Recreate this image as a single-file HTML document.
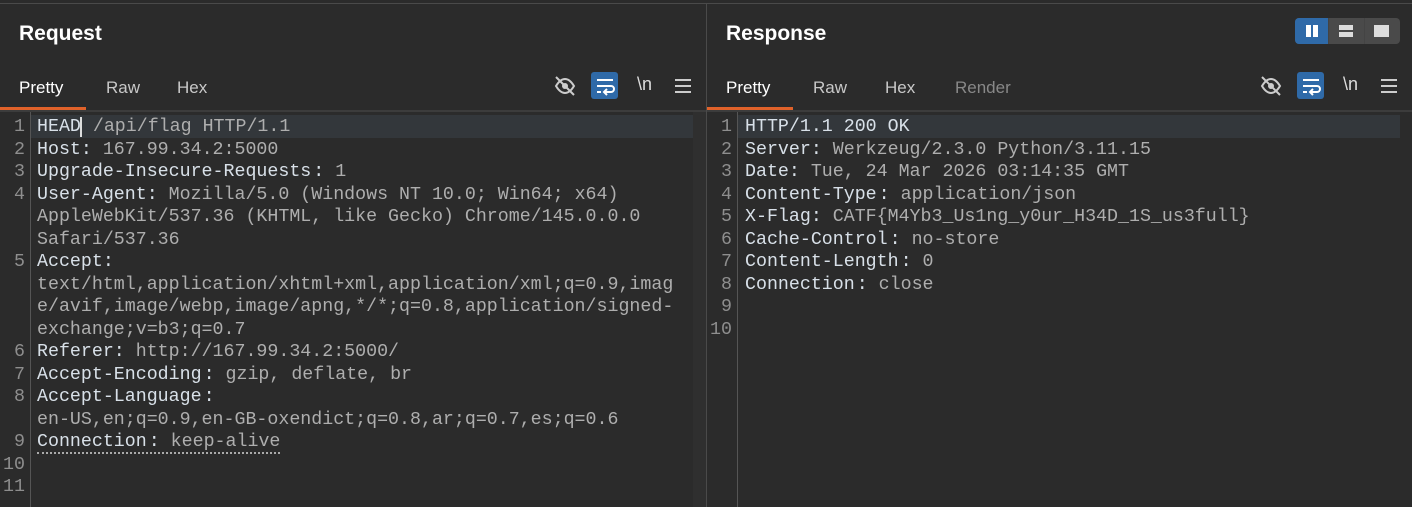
<!DOCTYPE html>
<html><head><style>
*{margin:0;padding:0;box-sizing:border-box}
body{width:1412px;height:507px;background:#2b2b2b;overflow:hidden;position:relative;font-family:"Liberation Sans",sans-serif}
.abs{position:absolute}
.title{font-weight:bold;font-size:21px;color:#fff;top:22px}
.tab{font-size:17px;color:#c8c8c8;top:78px}
.tab.act{color:#fff}
.code{font-family:"Liberation Mono",monospace;font-size:18.3px;line-height:22.5px;color:#aeaeae;white-space:pre}
.k{color:#d8e0e8}
.c{margin-left:2px}
.num{font-family:"Liberation Mono",monospace;font-size:18.3px;line-height:22.5px;color:#8e8e8e;text-align:right;white-space:pre}
.ic{width:28px;height:28px;top:72px}
</style></head><body>
<div class="abs" style="left:0;top:3px;width:1412px;height:1px;background:#4a4a4a"></div>
<div class="abs" style="left:706px;top:3px;width:1px;height:504px;background:#4a4a4a"></div>
<!-- Left -->
<div class="abs title" style="left:19px">Request</div>
<div class="abs tab act" style="left:19px">Pretty</div>
<div class="abs tab" style="left:106px">Raw</div>
<div class="abs tab" style="left:177px">Hex</div>
<div class="abs" style="left:0;top:107px;width:86px;height:3px;background:#e0622a"></div>
<div class="abs" style="left:0;top:110px;width:706px;height:2px;background:#3c3c3c"></div>
<svg class="abs ic" style="left:551px" viewBox="0 0 28 28"><path d="M5 14c3-5 6-7 9-7s6 2 9 7c-3 5-6 7-9 7s-6-2-9-7z" fill="none" stroke="#ccc" stroke-width="2"/><circle cx="14" cy="14" r="3" fill="#ccc"/><path d="M5 5l18 18" stroke="#ccc" stroke-width="2"/></svg>
<div class="abs" style="left:591px;top:72px;width:27px;height:27px;background:#2f6aa8;border-radius:3px"></div>
<svg class="abs ic" style="left:591px" viewBox="0 0 28 28"><path d="M6 8h16M6 14h14a3 3 0 0 1 0 6h-6M6 20h4" fill="none" stroke="#fff" stroke-width="2"/><path d="M16 17l-3 3 3 3" fill="none" stroke="#fff" stroke-width="2"/></svg>
<div class="abs" style="left:637px;top:74px;color:#ddd;font-size:18px">\n</div>
<svg class="abs ic" style="left:669px" viewBox="0 0 28 28"><path d="M6 8h16M6 14h16M6 20h16" stroke="#ccc" stroke-width="2"/></svg>
<div class="abs" style="left:30px;top:112px;width:1px;height:395px;background:#555"></div>
<div class="abs" style="left:31px;top:115px;width:662px;height:23px;background:#33373b"></div>
<div class="abs" style="left:693px;top:112px;width:13px;height:395px;background:#2f2f2f"></div>
<div class="abs num" style="left:0;top:116px;width:25px">1
2
3
4


5



6
7
8

9
10
11</div>
<div class="abs code" style="left:37px;top:116px"><span class="k">HEAD</span><span style="border-left:2px solid #ddd;margin-left:-1px"></span> /api/flag HTTP/1.1
<span class="k">Host:</span> 167.99.34.2:5000
<span class="k">Upgrade-Insecure-Requests<span class="c">:</span></span> 1
<span class="k">User-Agent:</span> Mozilla/5.0 (Windows NT 10.0; Win64; x64)
AppleWebKit/537.36 (KHTML, like Gecko) Chrome/145.0.0.0
Safari/537.36
<span class="k">Accept:</span>
text/html,application/xhtml+xml,application/xml;q=0.9,imag
e/avif,image/webp,image/apng,*/*;q=0.8,application/signed-
exchange;v=b3;q=0.7
<span class="k">Referer:</span> http://167.99.34.2:5000/
<span class="k">Accept-Encoding<span class="c">:</span></span> gzip, deflate, br
<span class="k">Accept-Language<span class="c">:</span></span>
en-US,en;q=0.9,en-GB-oxendict;q=0.8,ar;q=0.7,es;q=0.6
<span style="border-bottom:2px dotted #aaa"><span class="k">Connection<span class="c">:</span></span> keep-alive</span></div>
<!-- Right -->
<div class="abs title" style="left:726px">Response</div>
<div class="abs" style="left:1295px;top:18px;width:105px;height:26px;background:#4a4a4a;border-radius:4px;overflow:hidden">
<div class="abs" style="left:0;top:0;width:33px;height:26px;background:#2f6aa8"></div>
<div class="abs" style="left:11px;top:7px;width:5px;height:12px;background:#fff"></div>
<div class="abs" style="left:18px;top:7px;width:5px;height:12px;background:#fff"></div>
<div class="abs" style="left:33px;top:0;width:1px;height:26px;background:#444"></div>
<div class="abs" style="left:44px;top:7px;width:14px;height:5px;background:#ddd"></div>
<div class="abs" style="left:44px;top:14px;width:14px;height:5px;background:#ddd"></div>
<div class="abs" style="left:69px;top:0;width:1px;height:26px;background:#444"></div>
<div class="abs" style="left:79px;top:7px;width:15px;height:12px;background:#ddd"></div>
</div>
<div class="abs tab act" style="left:726px">Pretty</div>
<div class="abs tab" style="left:813px">Raw</div>
<div class="abs tab" style="left:885px">Hex</div>
<div class="abs tab" style="left:955px;color:#888">Render</div>
<div class="abs" style="left:707px;top:107px;width:86px;height:3px;background:#e0622a"></div>
<div class="abs" style="left:707px;top:110px;width:705px;height:2px;background:#3c3c3c"></div>
<svg class="abs ic" style="left:1257px" viewBox="0 0 28 28"><path d="M5 14c3-5 6-7 9-7s6 2 9 7c-3 5-6 7-9 7s-6-2-9-7z" fill="none" stroke="#ccc" stroke-width="2"/><circle cx="14" cy="14" r="3" fill="#ccc"/><path d="M5 5l18 18" stroke="#ccc" stroke-width="2"/></svg>
<div class="abs" style="left:1297px;top:72px;width:27px;height:27px;background:#2f6aa8;border-radius:3px"></div>
<svg class="abs ic" style="left:1297px" viewBox="0 0 28 28"><path d="M6 8h16M6 14h14a3 3 0 0 1 0 6h-6M6 20h4" fill="none" stroke="#fff" stroke-width="2"/><path d="M16 17l-3 3 3 3" fill="none" stroke="#fff" stroke-width="2"/></svg>
<div class="abs" style="left:1343px;top:74px;color:#ddd;font-size:18px">\n</div>
<svg class="abs ic" style="left:1375px" viewBox="0 0 28 28"><path d="M6 8h16M6 14h16M6 20h16" stroke="#ccc" stroke-width="2"/></svg>
<div class="abs" style="left:737px;top:112px;width:1px;height:395px;background:#555"></div>
<div class="abs" style="left:738px;top:115px;width:662px;height:23px;background:#33373b"></div>
<div class="abs num" style="left:707px;top:116px;width:25px">1
2
3
4
5
6
7
8
9
10</div>
<div class="abs code" style="left:745px;top:116px"><span class="k">HTTP/1.1 200 OK</span>
<span class="k">Server:</span> Werkzeug/2.3.0 Python/3.11.15
<span class="k">Date:</span> Tue, 24 Mar 2026 03:14:35 GMT
<span class="k">Content-Type<span class="c">:</span></span> application/json
<span class="k">X-Flag:</span> CATF{M4Yb3_Us1ng_y0ur_H34D_1S_us3full}
<span class="k">Cache-Control<span class="c">:</span></span> no-store
<span class="k">Content-Length<span class="c">:</span></span> 0
<span class="k">Connection<span class="c">:</span></span> close</div>
</body></html>
